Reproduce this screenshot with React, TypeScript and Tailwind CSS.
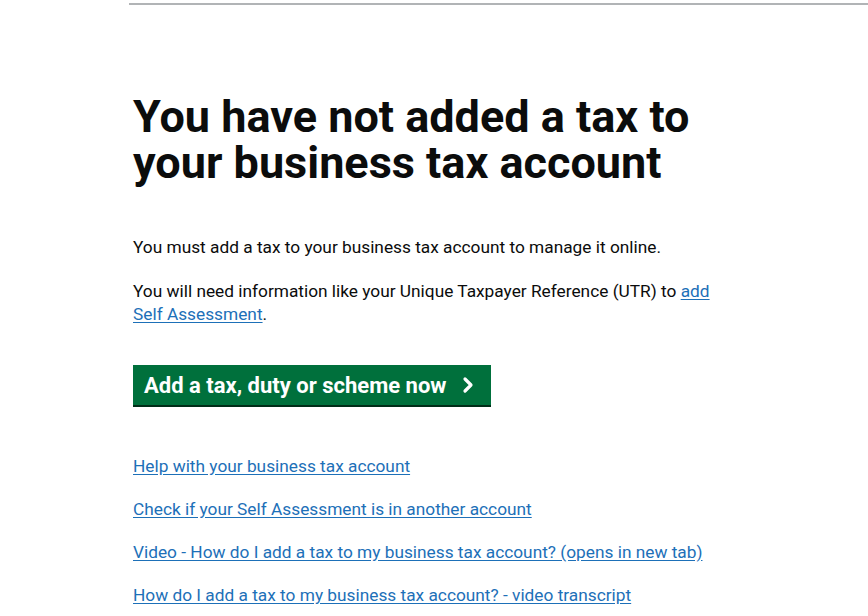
import { ChevronRight } from "lucide-react";

const links = [
  "Help with your business tax account",
  "Check if your Self Assessment is in another account",
  "Video - How do I add a tax to my business tax account? (opens in new tab)",
  "How do I add a tax to my business tax account? - video transcript",
];

export default function App() {
  return (
    <div className="min-h-[616px] w-[868px] bg-white font-['Roboto',sans-serif] text-[#0b0c0c]">
      {/* header rule */}
      <div className="pt-[3px] pl-[129px]">
        <div className="h-[2px] bg-[#b1b4b6]" />
      </div>

      <main className="pl-[133px] pt-[89px] w-[730px]">
        <h1 className="text-[45px] leading-[46px] font-bold">
          You have not added a tax to your business tax account
        </h1>

        <p className="mt-[50px] text-[17.3px] leading-[23px]">
          You must add a tax to your business tax account to manage it online.
        </p>
        <p className="mt-[21px] text-[17.3px] leading-[23px]">
          You will need information like your Unique Taxpayer Reference (UTR) to{" "}
          <a href="#" className="text-[#1d70b8] underline underline-offset-2">
            add Self Assessment
          </a>
          .
        </p>

        <button className="mt-[39px] flex items-center gap-[10px] bg-[#00703c] pl-[11px] pr-[11px] h-[40px] shadow-[0_2px_0_#002d18] text-white text-[22px] font-bold">
          Add a tax, duty or scheme now
          <ChevronRight className="w-[24px] h-[24px]" strokeWidth={3.2} />
        </button>

        <ul className="mt-[50px] flex flex-col gap-[20px]">
          {links.map((l) => (
            <li key={l} className="text-[17.3px] leading-[23px]">
              <a href="#" className="text-[#1d70b8] underline underline-offset-2">
                {l}
              </a>
            </li>
          ))}
        </ul>
      </main>
    </div>
  );
}
